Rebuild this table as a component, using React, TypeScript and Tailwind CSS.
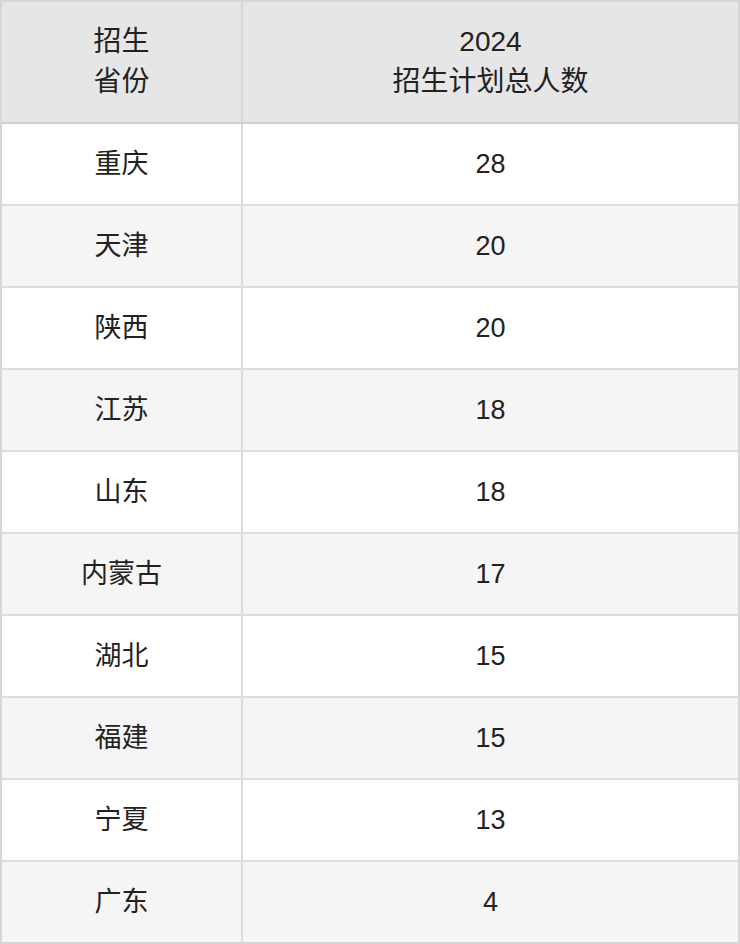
const rows: [string, string][] = [
  ["重庆", "28"],
  ["天津", "20"],
  ["陕西", "20"],
  ["江苏", "18"],
  ["山东", "18"],
  ["内蒙古", "17"],
  ["湖北", "15"],
  ["福建", "15"],
  ["宁夏", "13"],
  ["广东", "4"],
];

export default function App() {
  return (
    <div className="w-[740px] border-2 border-[#d6d6d6] bg-white font-['Liberation_Sans','Noto_Sans_CJK_SC',sans-serif] text-[#222]">
      <div className="grid grid-cols-[241px_1fr] h-[122px] border-b-2 border-[#cfcfcf] bg-[#e6e6e6] text-[28px] leading-[40px]">
        <div className="flex flex-col items-center justify-center border-r-2 border-[#d6d6d6]">
          <span>招生</span>
          <span>省份</span>
        </div>
        <div className="flex flex-col items-center justify-center">
          <span>2024</span>
          <span>招生计划总人数</span>
        </div>
      </div>
      {rows.map(([province, total], i) => (
        <div
          key={province}
          className={`grid grid-cols-[241px_1fr] text-[27px] ${
            i === rows.length - 1 ? "h-[80px]" : "h-[82px] border-b-2 border-[#dcdcdc]"
          } ${i % 2 === 1 ? "bg-[#f5f5f5]" : "bg-white"}`}
        >
          <div className="flex items-center justify-center border-r-2 border-[#dcdcdc]">{province}</div>
          <div className="flex items-center justify-center">{total}</div>
        </div>
      ))}
    </div>
  );
}
